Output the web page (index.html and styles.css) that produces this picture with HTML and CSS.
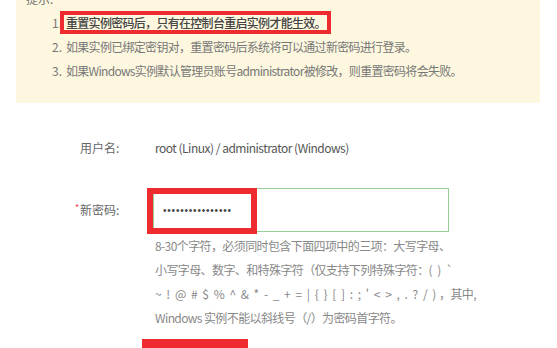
FILE: index.html
```html
<!DOCTYPE html>
<html lang="zh-CN">
<head>
<meta charset="utf-8">
<title>重置密码</title>
<link rel="stylesheet" href="styles.css">
</head>
<body>
<div class="page">
  <div class="notice">
    <div class="notice-title">提示:</div>
    <ul class="notice-list">
      <li><span class="num">1.</span><span class="txt strong"><span class="hl">重置实例密码后，只有在控制台重启实例才能生效。</span></span></li>
      <li><span class="num">2.</span><span class="txt">如果实例已绑定密钥对，重置密码后系统将可以通过新密码进行登录。</span></li>
      <li><span class="num">3.</span><span class="txt">如果Windows实例默认管理员账号administrator被修改，则重置密码将会失败。</span></li>
    </ul>
  </div>

  <div class="form">
    <div class="row row-user">
      <div class="label">用户名:</div>
      <div class="value">root (Linux) / administrator (Windows)</div>
    </div>
    <div class="row row-pass">
      <div class="label label-req"><span class="req">*</span>新密码:</div>
      <div class="field">
        <div class="input-wrap">
          <input class="pw" type="password" value="abcdefghijklmnop">
          <span class="mark"></span>
        </div>
        <div class="hint">8-30个字符，必须同时包含下面四项中的三项：大写字母、<br>小写字母、数字、和特殊字符（仅支持下列特殊字符：<span class="sym">( ) `</span><br><span class="sym">~ ! @ # $ % ^ &amp; * - _ + = | { } [ ] : ; ' &lt; &gt; , . ? / )</span> ，其中,<br>Windows 实例不能以斜线号（/）为密码首字符。</div>
      </div>
    </div>
    <div class="btn-row">
      <div class="btn"></div>
    </div>
  </div>
</div>
</body>
</html>
```

FILE: styles.css
```css
html, body {
  margin: 0;
  padding: 0;
  background: #ffffff;
}
body {
  font-family: "Noto Sans CJK SC", "Noto Sans", sans-serif;
  font-size: 12px;
  color: #666;
  overflow: hidden;
  width: 557px;
  height: 348px;
}
.page {
  width: 557px;
}
.notice {
  margin: -13px 0 0 16px;
  width: 524px;
  height: 116px;
  background: #fdf7df;
  box-sizing: border-box;
  padding-left: 10px;
}
.notice-title {
  line-height: 24px;
  color: #777;
}
.notice-list {
  list-style: none;
  margin: 0;
  padding: 0 0 0 24px;
}
.notice-list li {
  display: flex;
  line-height: 24px;
  color: #777;
  letter-spacing: -0.7px;
}
.num {
  width: 12px;
  text-align: right;
  margin-right: 4px;
  letter-spacing: 0;
}
.strong {
  color: #444;
  font-weight: 500;
}
.hl {
  position: relative;
}
.hl::after {
  content: "";
  position: absolute;
  left: -6px;
  right: -5px;
  top: -3px;
  bottom: -3px;
  border: 4px solid #ee2b2f;
}
.form {
  padding-left: 80px;
  padding-top: 35px;
}
.row {
  display: flex;
}
.label {
  width: 73px;
  color: #666;
  flex: none;
}
.label-req {
  margin-left: -5px;
  width: 78px;
}
.req {
  color: #f04040;
  display: inline-block;
  width: 5px;
  font-size: 9px;
  vertical-align: top;
  line-height: 40px;
}
.row-user {
  line-height: 20px;
}
.value {
  color: #555;
  padding-left: 2px;
  letter-spacing: -0.5px;
}
.row-pass {
  margin-top: 30px;
}
.row-pass .label {
  line-height: 44px;
}
.input-wrap {
  position: relative;
  width: 296px;
  height: 44px;
}
.pw {
  box-sizing: border-box;
  width: 296px;
  height: 44px;
  margin: 0;
  border: 1px solid #96cf96;
  outline: none;
  padding: 0 0 0 9px;
  font-family: "Liberation Sans", sans-serif;
  font-size: 10px;
  letter-spacing: 0.8px;
  color: #444;
  background: #fff;
}
.mark {
  position: absolute;
  left: -6px;
  top: 0;
  width: 110px;
  height: 46px;
  box-sizing: border-box;
  border: 6px solid #ee2b2f;
}
.hint {
  margin-top: 2px;
  padding-left: 2px;
  line-height: 24px;
  color: #888;
  letter-spacing: -0.6px;
}
.sym {
  letter-spacing: 0.5px;
  word-spacing: 1px;
}
.btn-row {
  padding-left: 62px;
  margin-top: 9px;
}
.btn {
  width: 106px;
  height: 30px;
  background: #ee2b2f;
}
```
